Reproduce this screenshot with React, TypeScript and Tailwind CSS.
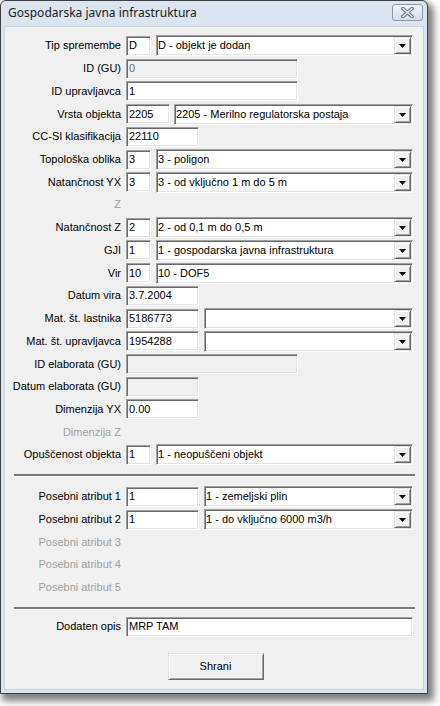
import React from "react";

const sunken =
  "border border-t-[#a0a0a0] border-l-[#a0a0a0] border-b-white border-r-white shadow-[inset_1px_1px_0_#696969,inset_-1px_-1px_0_#e3e3e3]";
const raised =
  "border border-t-[#e3e3e3] border-l-[#e3e3e3] border-b-[#696969] border-r-[#696969] shadow-[inset_1px_1px_0_#ffffff,inset_-1px_-1px_0_#a0a0a0]";

interface RowProps {
  label: string;
  disabled?: boolean;
  children?: React.ReactNode;
}

const Row: React.FC<RowProps> = ({ label, disabled, children }) => (
  <div className="flex h-[22.72px] items-center">
    <span
      className={`w-[116px] shrink-0 text-right leading-none ${disabled ? "text-[#a0a0a0]" : "text-black"}`}
    >
      {label}
    </span>
    {children}
  </div>
);

const TextBox: React.FC<{ value: string; width: string; disabled?: boolean; ml?: string }> = ({
  value,
  width,
  disabled,
  ml = "ml-[5px]",
}) => (
  <div
    className={`${sunken} ${width} ${ml} flex h-[20px] items-center pl-[2px] ${
      disabled ? "bg-[#f0f0f0] text-[#6d6d6d]" : "bg-white text-black"
    }`}
  >
    <span className="leading-none">{value}</span>
  </div>
);

const Combo: React.FC<{ value: string; width: string; ml?: string }> = ({ value, width, ml = "ml-[5px]" }) => (
  <div className={`${sunken} ${width} ${ml} flex h-[21px] items-stretch bg-white`}>
    <span className="flex flex-1 items-center pl-[1px] leading-none text-black">{value}</span>
    <div className={`${raised} my-[1px] mr-[1px] flex w-[17px] items-center justify-center bg-[#f0f0f0]`}>
      <svg width="7" height="4" viewBox="0 0 7 4" className="mt-[1px]">
        <polygon points="0,0 7,0 3.5,4" fill="#000" />
      </svg>
    </div>
  </div>
);

const Separator = () => (
  <div className="ml-[9px] h-[3px] w-[401px] border-t-2 border-b border-t-[#7a7a7a] border-b-white" />
);

export default function App() {
  return (
    <div className="h-[706px] w-[440px] bg-white" style={{ fontFamily: "'Liberation Sans', Arial, sans-serif" }}>
      <div className="flex h-[694px] w-[428px] flex-col rounded-t-[6px] border border-[#3f3f3f] bg-[#dbe4ef] px-[3px] pb-[3px] shadow-[4px_5px_7px_2px_rgba(0,0,0,0.5)]">
        {/* naslovna vrstica */}
        <div className="flex h-[25px] shrink-0 items-center justify-between pl-[4px]">
          <span
            className="mb-[1px] text-[12px] leading-none text-[#1b1b1b]"
            style={{ fontFamily: "'Noto Sans', 'Open Sans', sans-serif" }}
          >
            Gospodarska javna infrastruktura
          </span>
          <div className="mb-[2px] mr-[1px] flex h-[17px] w-[31px] items-center justify-center rounded-[3px] border border-[#8d99a8] bg-gradient-to-b from-[#f2f5f9] to-[#d5dee9]">
            <svg width="13" height="11" viewBox="0 0 13 11">
              <path d="M2 1.5 L11 9.5 M11 1.5 L2 9.5" stroke="#6e7886" strokeWidth="3.6" strokeLinecap="square" />
              <path d="M2 1.5 L11 9.5 M11 1.5 L2 9.5" stroke="#eef2f6" strokeWidth="1.4" strokeLinecap="square" />
            </svg>
          </div>
        </div>

        <div className="flex flex-1 flex-col border border-[#c9d3df] bg-[#f0f0f0] pt-[7.6px] text-[11px]">
          <Row label="Tip spremembe">
            <TextBox value="D" width="w-[25px]" />
            <Combo value="D - objekt je dodan" width="w-[257px]" />
          </Row>
          <Row label="ID (GU)">
            <TextBox value="0" width="w-[172px]" disabled />
          </Row>
          <Row label="ID upravljavca">
            <TextBox value="1" width="w-[172px]" />
          </Row>
          <Row label="Vrsta objekta">
            <TextBox value="2205" width="w-[44px]" />
            <Combo value="2205 - Merilno regulatorska postaja" width="w-[239px]" ml="ml-[4px]" />
          </Row>
          <Row label="CC-SI klasifikacija">
            <TextBox value="22110" width="w-[73px]" />
          </Row>
          <Row label="Topološka oblika">
            <TextBox value="3" width="w-[25px]" />
            <Combo value="3 - poligon" width="w-[257px]" />
          </Row>
          <Row label="Natančnost YX">
            <TextBox value="3" width="w-[25px]" />
            <Combo value="3 - od vključno 1 m do 5 m" width="w-[257px]" />
          </Row>
          <Row label="Z" disabled />
          <Row label="Natančnost Z">
            <TextBox value="2" width="w-[25px]" />
            <Combo value="2 - od 0,1 m do 0,5 m" width="w-[257px]" />
          </Row>
          <Row label="GJI">
            <TextBox value="1" width="w-[25px]" />
            <Combo value="1 - gospodarska javna infrastruktura" width="w-[257px]" />
          </Row>
          <Row label="Vir">
            <TextBox value="10" width="w-[25px]" />
            <Combo value="10 - DOF5" width="w-[257px]" />
          </Row>
          <Row label="Datum vira">
            <TextBox value="3.7.2004" width="w-[73px]" />
          </Row>
          <Row label="Mat. št. lastnika">
            <TextBox value="5186773" width="w-[73px]" />
            <Combo value="" width="w-[209px]" />
          </Row>
          <Row label="Mat. št. upravljavca">
            <TextBox value="1954288" width="w-[73px]" />
            <Combo value="" width="w-[209px]" />
          </Row>
          <Row label="ID elaborata (GU)">
            <TextBox value="" width="w-[172px]" disabled />
          </Row>
          <Row label="Datum elaborata (GU)">
            <TextBox value="" width="w-[73px]" disabled />
          </Row>
          <Row label="Dimenzija YX">
            <TextBox value="0.00" width="w-[73px]" />
          </Row>
          <Row label="Dimenzija Z" disabled />
          <Row label="Opuščenost objekta">
            <TextBox value="1" width="w-[25px]" />
            <Combo value="1 - neopuščeni objekt" width="w-[257px]" />
          </Row>

          <div className="mt-[8px] mb-[8.2px]">
            <Separator />
          </div>

          <Row label="Posebni atribut 1">
            <TextBox value="1" width="w-[73px]" />
            <Combo value="1 - zemeljski plin" width="w-[209px]" />
          </Row>
          <Row label="Posebni atribut 2">
            <TextBox value="1" width="w-[73px]" />
            <Combo value="1 - do vključno 6000 m3/h" width="w-[209px]" />
          </Row>
          <Row label="Posebni atribut 3" disabled />
          <Row label="Posebni atribut 4" disabled />
          <Row label="Posebni atribut 5" disabled />

          <div className="mt-[8px] mb-[5.4px]">
            <Separator />
          </div>

          <Row label="Dodaten opis">
            <TextBox value="MRP TAM" width="w-[287px]" />
          </Row>

          <div className="mt-[14.6px] flex justify-center pl-[3px]">
            <button
              className={`${raised} flex h-[27px] w-[96px] items-center justify-center bg-[#f0f0f0] text-[11px] leading-none text-black`}
            >
              Shrani
            </button>
          </div>
        </div>
      </div>
    </div>
  );
}
